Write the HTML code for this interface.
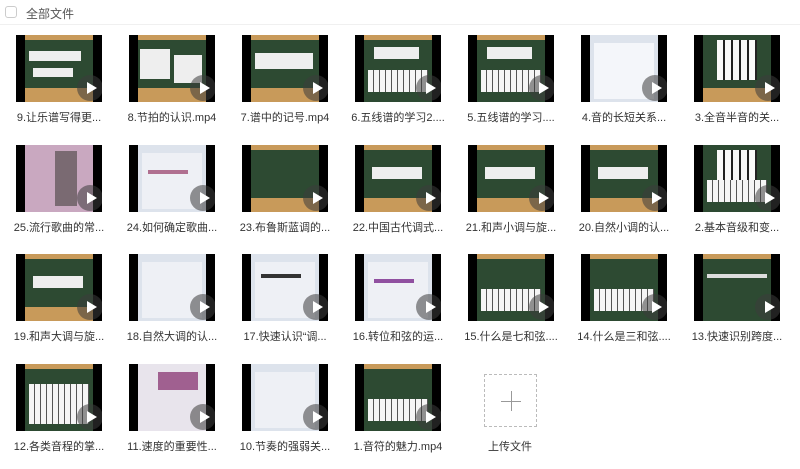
<!DOCTYPE html>
<html><head><meta charset="utf-8"><style>
*{margin:0;padding:0;box-sizing:border-box}
body{width:800px;height:469px;background:#fff;font-family:"Liberation Sans","Noto Sans CJK SC",sans-serif;position:relative;overflow:hidden;color:#333}
.hdr{position:absolute;left:0;top:0;width:800px;height:25px;border-bottom:1px solid #f0f0f0}
.cb{position:absolute;left:5px;top:6px;width:12px;height:12px;border:1px solid #ccc;border-radius:3px}
.ht{position:absolute;left:26px;top:5px;font-size:12px;color:#555}
.it{position:absolute;width:113px;height:105px}
.th{position:absolute;left:16px;top:0;width:86px;height:67px;background:#000;overflow:hidden}
.in{position:absolute;left:9px;top:0;width:68px;height:67px;background:#2d4a32}
.wood{position:absolute;left:0;bottom:0;width:68px;height:14px;background:#c89a5a}
.top{position:absolute;left:0;top:0;width:68px;height:5px;background:#c89a5a}
.pl{position:absolute;left:61px;top:40px;width:26px;height:26px;border-radius:50%;background:rgba(60,60,60,.55)}
.pl:after{content:"";position:absolute;left:10px;top:7px;border-left:10px solid #fff;border-top:6px solid transparent;border-bottom:6px solid transparent}
.lb{position:absolute;left:0;top:74px;width:118px;text-align:center;font-size:11px;color:#333;white-space:nowrap}
.pap{position:absolute;background:#eee}
.kb{position:absolute;left:4px;top:35px;width:60px;height:22px;background:repeating-linear-gradient(90deg,#f5f5f5 0 5px,#555 5px 6px)}
.wh{background:#f4f4f4}
.sw{background:#dde3ec}
</style></head><body>
<div class="hdr"><div class="cb"></div><div class="ht">全部文件</div></div>

<!-- row1 -->
<div class="it" style="left:0;top:35px"><div class="th"><div class="in"><div class="top"></div><div class="pap" style="left:4px;top:16px;width:52px;height:10px"></div><div class="pap" style="left:8px;top:33px;width:40px;height:9px"></div><div class="wood"></div></div><div class="pl"></div></div><div class="lb">9.让乐谱写得更...</div></div>
<div class="it" style="left:113px;top:35px"><div class="th"><div class="in"><div class="top"></div><div class="pap" style="left:2px;top:14px;width:30px;height:30px"></div><div class="pap" style="left:36px;top:20px;width:28px;height:28px"></div><div class="wood"></div></div><div class="pl"></div></div><div class="lb">8.节拍的认识.mp4</div></div>
<div class="it" style="left:226px;top:35px"><div class="th"><div class="in"><div class="top"></div><div class="pap" style="left:4px;top:18px;width:58px;height:16px"></div><div class="wood"></div></div><div class="pl"></div></div><div class="lb">7.谱中的记号.mp4</div></div>
<div class="it" style="left:339px;top:35px"><div class="th"><div class="in"><div class="top"></div><div class="pap" style="left:10px;top:12px;width:45px;height:12px"></div><div class="kb"></div></div><div class="pl"></div></div><div class="lb">6.五线谱的学习2....</div></div>
<div class="it" style="left:452px;top:35px"><div class="th"><div class="in"><div class="top"></div><div class="pap" style="left:10px;top:12px;width:45px;height:12px"></div><div class="kb"></div></div><div class="pl"></div></div><div class="lb">5.五线谱的学习....</div></div>
<div class="it" style="left:565px;top:35px"><div class="th"><div class="in sw"><div class="pap" style="left:4px;top:8px;width:60px;height:56px;background:#f4f6fa"></div></div><div class="pl"></div></div><div class="lb">4.音的长短关系...</div></div>
<div class="it" style="left:678px;top:35px"><div class="th"><div class="in"><div class="pap" style="left:14px;top:5px;width:40px;height:40px;background:repeating-linear-gradient(90deg,#fafafa 0 6px,#222 6px 8px)"></div><div class="wood"></div></div><div class="pl"></div></div><div class="lb">3.全音半音的关...</div></div>

<!-- row2 -->
<div class="it" style="left:0;top:145px"><div class="th"><div class="in" style="background:#c9a8c0"><div class="pap" style="left:30px;top:6px;width:22px;height:55px;background:#7a6a72"></div></div><div class="pl"></div></div><div class="lb">25.流行歌曲的常...</div></div>
<div class="it" style="left:113px;top:145px"><div class="th"><div class="in sw"><div class="pap" style="left:4px;top:8px;width:60px;height:56px;background:#eef0f5"></div><div class="pap" style="left:10px;top:25px;width:40px;height:4px;background:#b07090"></div></div><div class="pl"></div></div><div class="lb">24.如何确定歌曲...</div></div>
<div class="it" style="left:226px;top:145px"><div class="th"><div class="in"><div class="top"></div><div class="wood"></div></div><div class="pl"></div></div><div class="lb">23.布鲁斯蓝调的...</div></div>
<div class="it" style="left:339px;top:145px"><div class="th"><div class="in"><div class="top"></div><div class="pap" style="left:8px;top:22px;width:50px;height:12px"></div><div class="wood"></div></div><div class="pl"></div></div><div class="lb">22.中国古代调式...</div></div>
<div class="it" style="left:452px;top:145px"><div class="th"><div class="in"><div class="top"></div><div class="pap" style="left:8px;top:22px;width:50px;height:12px"></div><div class="wood"></div></div><div class="pl"></div></div><div class="lb">21.和声小调与旋...</div></div>
<div class="it" style="left:565px;top:145px"><div class="th"><div class="in"><div class="top"></div><div class="pap" style="left:8px;top:22px;width:50px;height:12px"></div><div class="wood"></div></div><div class="pl"></div></div><div class="lb">20.自然小调的认...</div></div>
<div class="it" style="left:678px;top:145px"><div class="th"><div class="in"><div class="pap" style="left:14px;top:5px;width:40px;height:30px;background:repeating-linear-gradient(90deg,#fafafa 0 6px,#222 6px 8px)"></div><div class="kb"></div></div><div class="pl"></div></div><div class="lb">2.基本音级和变...</div></div>

<!-- row3 -->
<div class="it" style="left:0;top:254px"><div class="th"><div class="in"><div class="top"></div><div class="pap" style="left:8px;top:22px;width:50px;height:12px"></div><div class="wood"></div></div><div class="pl"></div></div><div class="lb">19.和声大调与旋...</div></div>
<div class="it" style="left:113px;top:254px"><div class="th"><div class="in sw"><div class="pap" style="left:4px;top:8px;width:60px;height:56px;background:#eef0f5"></div></div><div class="pl"></div></div><div class="lb">18.自然大调的认...</div></div>
<div class="it" style="left:226px;top:254px"><div class="th"><div class="in sw"><div class="pap" style="left:4px;top:8px;width:60px;height:56px;background:#eef0f5"></div><div class="pap" style="left:10px;top:20px;width:40px;height:4px;background:#333"></div></div><div class="pl"></div></div><div class="lb">17.快速认识“调...</div></div>
<div class="it" style="left:339px;top:254px"><div class="th"><div class="in sw"><div class="pap" style="left:4px;top:8px;width:60px;height:56px;background:#eef0f5"></div><div class="pap" style="left:10px;top:25px;width:40px;height:4px;background:#9050a0"></div></div><div class="pl"></div></div><div class="lb">16.转位和弦的运...</div></div>
<div class="it" style="left:452px;top:254px"><div class="th"><div class="in"><div class="top"></div><div class="kb"></div></div><div class="pl"></div></div><div class="lb">15.什么是七和弦....</div></div>
<div class="it" style="left:565px;top:254px"><div class="th"><div class="in"><div class="top"></div><div class="kb"></div></div><div class="pl"></div></div><div class="lb">14.什么是三和弦....</div></div>
<div class="it" style="left:678px;top:254px"><div class="th"><div class="in"><div class="top"></div><div class="pap" style="left:4px;top:20px;width:60px;height:4px;background:#ddd"></div></div><div class="pl"></div></div><div class="lb">13.快速识别跨度...</div></div>

<!-- row4 -->
<div class="it" style="left:0;top:364px"><div class="th"><div class="in"><div class="top"></div><div class="kb" style="top:20px;height:40px"></div></div><div class="pl"></div></div><div class="lb">12.各类音程的掌...</div></div>
<div class="it" style="left:113px;top:364px"><div class="th"><div class="in" style="background:#e8e4ec"><div class="pap" style="left:20px;top:8px;width:40px;height:18px;background:#a06090"></div></div><div class="pl"></div></div><div class="lb">11.速度的重要性...</div></div>
<div class="it" style="left:226px;top:364px"><div class="th"><div class="in sw"><div class="pap" style="left:4px;top:8px;width:60px;height:56px;background:#eef0f5"></div></div><div class="pl"></div></div><div class="lb">10.节奏的强弱关...</div></div>
<div class="it" style="left:339px;top:364px"><div class="th"><div class="in"><div class="top"></div><div class="kb"></div></div><div class="pl"></div></div><div class="lb">1.音符的魅力.mp4</div></div>

<div style="position:absolute;left:484px;top:374px;width:53px;height:53px;border:1px dashed #bbb">
<div style="position:absolute;left:16px;top:26px;width:20px;height:1px;background:#999"></div>
<div style="position:absolute;left:26px;top:16px;width:1px;height:20px;background:#999"></div></div>
<div style="position:absolute;left:470px;top:438px;width:80px;text-align:center;font-size:11px;color:#333">上传文件</div>
</body></html>
